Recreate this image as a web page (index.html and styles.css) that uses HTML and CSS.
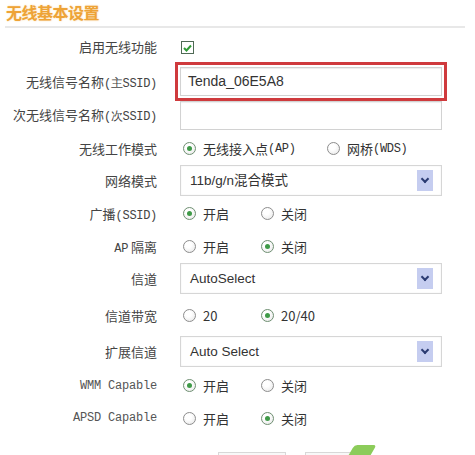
FILE: index.html
```html
<!DOCTYPE html>
<html>
<head>
	<meta charset="utf-8">
	<title>无线基本设置</title>
	<link rel="stylesheet" href="styles.css">
</head>
<body>
	<div class="head">
		<h1>无线基本设置</h1>
	</div>
	<div class="form">
		<div class="label"><span>启用无线功能</span></div>
		<div class="ctrl">
			<span class="check"><svg width="9" height="8" viewBox="0 0 9 8"><path d="M1 4 L3.5 6.5 L8 1.5" fill="none" stroke="#2f9a35" stroke-width="2"/></svg></span>
		</div>

		<div class="label"><span>无线信号名称<span class="en">(主SSID)</span></span></div>
		<div class="ctrl"><div class="input hl">Tenda_06E5A8</div></div>

		<div class="label"><span>次无线信号名称<span class="en">(次SSID)</span></span></div>
		<div class="ctrl"><div class="input"></div></div>

		<div class="label"><span>无线工作模式</span></div>
		<div class="ctrl">
			<span class="opt wide"><i class="radio on"></i>无线接入点<span class="en">(AP)</span></span>
			<span class="opt"><i class="radio"></i>网桥<span class="en">(WDS)</span></span>
		</div>

		<div class="label"><span>网络模式</span></div>
		<div class="ctrl"><div class="select">11b/g/n混合模式<span class="arrow"></span></div></div>

		<div class="label"><span>广播<span class="en">(SSID)</span></span></div>
		<div class="ctrl">
			<span class="opt"><i class="radio on"></i>开启</span>
			<span class="opt"><i class="radio"></i>关闭</span>
		</div>

		<div class="label"><span><span class="en">AP</span> 隔离</span></div>
		<div class="ctrl">
			<span class="opt"><i class="radio"></i>开启</span>
			<span class="opt"><i class="radio on"></i>关闭</span>
		</div>

		<div class="label"><span>信道</span></div>
		<div class="ctrl"><div class="select">AutoSelect<span class="arrow"></span></div></div>

		<div class="label"><span>信道带宽</span></div>
		<div class="ctrl">
			<span class="opt"><i class="radio"></i>20</span>
			<span class="opt"><i class="radio on"></i>20/40</span>
		</div>

		<div class="label"><span>扩展信道</span></div>
		<div class="ctrl"><div class="select">Auto Select<span class="arrow"></span></div></div>

		<div class="label latin"><span>WMM Capable</span></div>
		<div class="ctrl">
			<span class="opt"><i class="radio on"></i>开启</span>
			<span class="opt"><i class="radio"></i>关闭</span>
		</div>

		<div class="label latin"><span>APSD Capable</span></div>
		<div class="ctrl">
			<span class="opt"><i class="radio"></i>开启</span>
			<span class="opt"><i class="radio on"></i>关闭</span>
		</div>
	</div>
	<div class="buttons">
		<span class="btn b1"></span>
		<span class="btn b2"></span>
		<span class="mark"></span>
	</div>
</body>
</html>
```
FILE: styles.css
```css
body {
	margin: 0;
	background: #fff;
	color: #333;
	font-family: "Noto Sans CJK SC", sans-serif;
	font-size: 13px;
	width: 475px;
	height: 455px;
	overflow: hidden;
}

.head {
	height: 26px;
	margin: 0 10px 0 5px;
	border-bottom: 2px solid #e8e8e8;
}

.head h1 {
	margin: 0;
	padding: 1px 0 0 1px;
	font-size: 16px;
	line-height: 22px;
	font-weight: bold;
	color: #eea336;
	text-shadow: 0 0 2px #f8d8a0;
	letter-spacing: -0.5px;
}

.form {
	display: grid;
	grid-template-columns: 157px 1fr;
	column-gap: 23px;
	grid-template-rows: 37px 33px 34px 33px 31px 35px 31px 33px 41px 31px 37px 28px;
}

.label {
	display: flex;
	align-items: center;
	justify-content: flex-end;
	color: #444;
	white-space: nowrap;
}

.en {
	font-family: "Liberation Mono", monospace;
	font-size: 12px;
	letter-spacing: -0.3px;
}

.label.latin {
	font-family: "Liberation Mono", monospace;
	font-size: 12px;
	letter-spacing: -0.2px;
	color: #555;
}

.ctrl {
	display: flex;
	align-items: center;
}

.check {
	display: flex;
	align-items: center;
	justify-content: center;
	width: 11px;
	height: 11px;
	margin: 2px 0 0 1px;
	border: 1px solid #4f6a55;
	background: #fff;
}

.input {
	box-sizing: border-box;
	width: 262px;
	height: 29px;
	border: 1px solid #d2d2d2;
	box-shadow: inset 0 1px 1px #eee;
	padding-left: 7px;
	line-height: 27px;
	font-family: "Liberation Sans", Arial, sans-serif;
	font-size: 14px;
	color: #333;
}

.input.hl {
	outline: 3px solid #cf3a3d;
	outline-offset: 2px;
}

.select {
	position: relative;
	box-sizing: border-box;
	width: 262px;
	height: 31px;
	border: 1px solid #d6d6d6;
	box-shadow: inset 0 0 2px #eee;
	padding-left: 9px;
	line-height: 29px;
	font-family: "Liberation Sans", Arial, "Noto Sans CJK SC", sans-serif;
	font-size: 13.5px;
	color: #333;
}

.arrow {
	position: absolute;
	right: 8px;
	top: 4px;
	width: 16px;
	height: 21px;
	background: #c5cdf0;
}

.arrow::after {
	content: "";
	position: absolute;
	left: 5px;
	top: 6px;
	width: 4px;
	height: 4px;
	border-right: 2px solid #2b3b72;
	border-bottom: 2px solid #2b3b72;
	transform: rotate(45deg);
}

.opt {
	display: inline-flex;
	align-items: center;
	min-width: 78px;
	white-space: nowrap;
	color: #333;
}

.opt.wide {
	min-width: 144px;
}

.radio {
	box-sizing: border-box;
	width: 13px;
	height: 13px;
	margin: 0 7px 0 3px;
	border: 1px solid #8d8d8d;
	border-radius: 50%;
	background: radial-gradient(circle at 40% 35%, #fff 30%, #e4e4e4 100%);
	display: inline-flex;
	align-items: center;
	justify-content: center;
}

.radio.on {
	border-color: #6f8f72;
}

.radio.on::after {
	content: "";
	width: 5px;
	height: 5px;
	border-radius: 50%;
	background: #3f9a48;
}

.buttons {
	display: flex;
	align-items: flex-start;
	margin-top: 20px;
	padding-left: 218px;
}

.btn {
	display: block;
	height: 10px;
	border: 1px solid #d8d8d8;
	border-bottom: none;
	background: #f8f8f8;
}

.b1 {
	width: 66px;
}

.b2 {
	width: 48px;
	margin-left: 19px;
}

.mark {
	display: block;
	width: 22px;
	height: 12px;
	margin-left: -4px;
	margin-top: -7px;
	background: #8ccc5a;
	transform: skewX(-30deg);
	border-radius: 3px 3px 0 0;
}
```
